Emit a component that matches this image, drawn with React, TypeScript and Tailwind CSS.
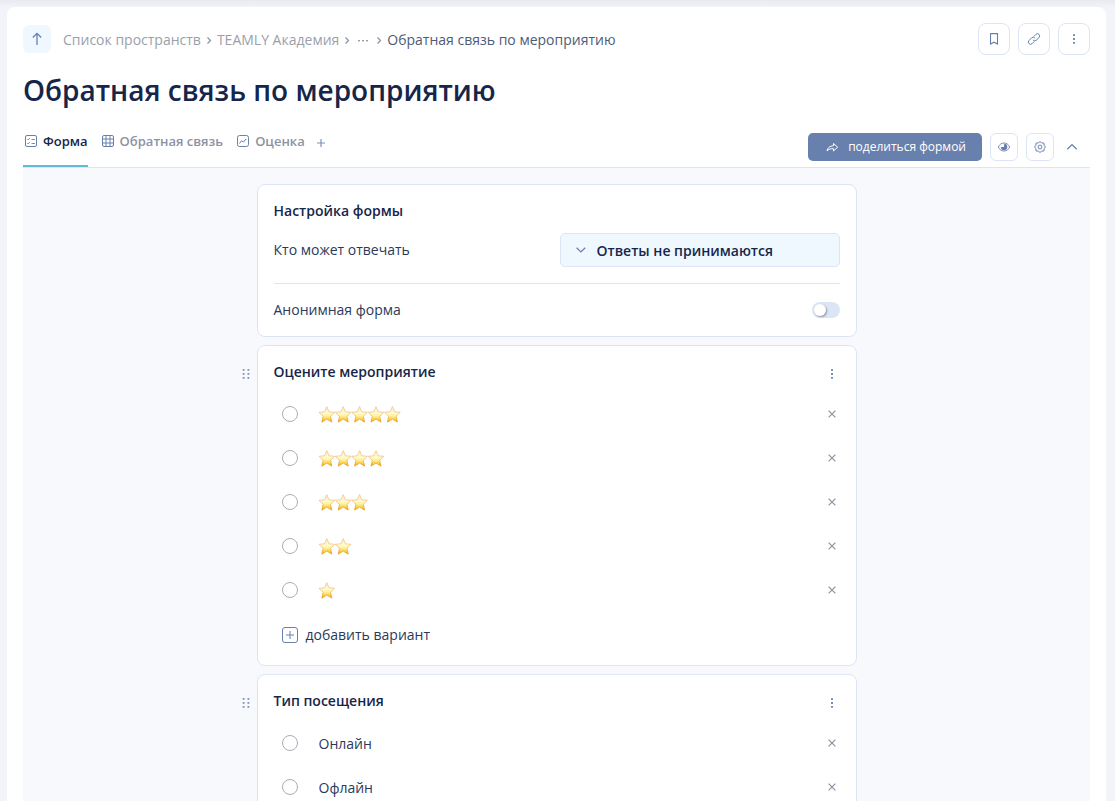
import { ReactNode } from "react";

interface StarsProps {
  count: number;
}

interface Question {
  id: string;
  title: string;
  options: { label: string; stars?: number }[];
}

const questions: Question[] = [
  {
    id: "rating",
    title: "Оцените мероприятие",
    options: [
      { label: "5 звёзд", stars: 5 },
      { label: "4 звезды", stars: 4 },
      { label: "3 звезды", stars: 3 },
      { label: "2 звезды", stars: 2 },
      { label: "1 звезда", stars: 1 },
    ],
  },
  {
    id: "visit",
    title: "Тип посещения",
    options: [{ label: "Онлайн" }, { label: "Офлайн" }],
  },
];

function Chevron() {
  return (
    <svg className="h-4 w-4 shrink-0 text-[#8d95a8]" viewBox="0 0 16 16" fill="none" stroke="currentColor" strokeWidth="1.3" aria-hidden="true">
      <path d="M6.5 5.5l3 3-3 3" />
    </svg>
  );
}

function DotsVertical() {
  return (
    <svg className="h-4 w-4" viewBox="0 0 16 16" fill="currentColor" aria-hidden="true">
      <rect x="7" y="3.3" width="2" height="1.6" />
      <rect x="7" y="7.1" width="2" height="1.8" />
      <rect x="7" y="11.1" width="2" height="1.6" />
    </svg>
  );
}

function DragHandle() {
  return (
    <svg className="h-4 w-4" viewBox="0 0 16 16" fill="currentColor" opacity="0.85" aria-hidden="true">
      {[3, 7, 11].map((y) => (
        <g key={y}>
          <rect x="4.7" y={y} width="1.8" height="1.8" />
          <rect x="9.5" y={y} width="1.8" height="1.8" />
        </g>
      ))}
    </svg>
  );
}

function Stars({ count }: StarsProps) {
  const width = 17 + (count - 1) * 16.4;
  return (
    <svg width={width} height="18" viewBox={`0 0 ${width} 18`} aria-hidden="true">
      <defs>
        <linearGradient id={`star-${count}`} x1="0" y1="0" x2="0" y2="1">
          <stop offset="0" stopColor="#fdeebb" />
          <stop offset="0.4" stopColor="#fffbd2" />
          <stop offset="0.6" stopColor="#fef1a0" />
          <stop offset="0.8" stopColor="#fbd348" />
          <stop offset="1" stopColor="#f2a007" />
        </linearGradient>
        <linearGradient id={`edge-${count}`} x1="0" y1="0" x2="0" y2="1">
          <stop offset="0" stopColor="#efc690" />
          <stop offset="0.45" stopColor="#f0c184" />
          <stop offset="1" stopColor="#e99a12" />
        </linearGradient>
      </defs>
      {Array.from({ length: count }).map((_, i) => (
        <path
          key={i}
          transform={`translate(${i * 16.4} 1)`}
          d="M7.8 .6l2.200 5.200 5.700.5-4.200 3.900 1.300 5.900-5-3-5 3 1.300-5.900-4.200-3.900 5.700-.5z"
          fill={`url(#star-${count})`}
          stroke={`url(#edge-${count})`}
          strokeWidth="0.8"
          strokeLinejoin="round"
        />
      ))}
    </svg>
  );
}

function Tab({ icon, label, active }: { icon: ReactNode; label: string; active?: boolean }) {
  return (
    <button
      type="button"
      className={
        active
          ? "flex items-center gap-1 border-b-2 border-[#63b8da] pb-[14px] text-[13px] leading-5 font-semibold text-[#16264a]"
          : "flex items-center gap-1 border-b-2 border-transparent pb-[14px] text-[13px] leading-5 font-semibold text-[#8c93a3]"
      }
    >
      <svg className="h-4 w-4 text-[#6880ae]" viewBox="0 0 16 16" fill="none" stroke="currentColor" aria-hidden="true">
        {icon}
      </svg>
      {label}
    </button>
  );
}

function QuestionCard({ question }: { question: Question }) {
  return (
    <section className="grid grid-cols-[22px_minmax(0,1fr)_22px]">
      <button type="button" aria-label="Переместить" className="mt-[21px] flex h-4 justify-center text-[#6880ae]">
        <DragHandle />
      </button>
      <div className="rounded-lg border border-[#dce5f5] bg-white p-4">
        <div className="flex items-center justify-between">
          <h2 className="text-sm leading-5 font-semibold text-[#16264a]">{question.title}</h2>
          <button type="button" aria-label="Меню вопроса" className="mt-1 text-[#6880ae]">
            <DotsVertical />
          </button>
        </div>
        <ul className="mt-[10px]">
          {question.options.map((option) => (
            <li key={option.label} className="flex h-11 items-center pl-2">
              <label className="flex flex-1 items-center gap-[21px]">
                <input
                  type="radio"
                  name={question.id}
                  aria-label={option.label}
                  className="h-4 w-4 appearance-none rounded-full border border-[#a9adb6] bg-white checked:border-[5px] checked:border-[#6880ae]"
                />
                {option.stars ? <Stars count={option.stars} /> : <span className="pt-0.5">{option.label}</span>}
              </label>
              <button type="button" aria-label="Удалить вариант" className="text-[#8c93a3]">
                <svg className="h-4 w-4" viewBox="0 0 16 16" fill="none" stroke="currentColor" strokeWidth="1.2" aria-hidden="true">
                  <path d="M4.6 4.6l6.800 6.800M11.400 4.600l-6.800 6.800" />
                </svg>
              </button>
            </li>
          ))}
        </ul>
        <button type="button" className="mt-2 flex h-[29px] items-center gap-2 pl-2">
          <svg className="h-4 w-4 text-[#6880ae]" viewBox="0 0 16 16" fill="none" stroke="currentColor" aria-hidden="true">
            <rect x="0.5" y="0.5" width="15" height="15" rx="2.5" />
            <path d="M8 4v8M4 8h8" />
          </svg>
          добавить вариант
        </button>
      </div>
    </section>
  );
}

export default function App() {
  return (
    <div className="h-screen overflow-hidden bg-[#f3f4f9] bg-linear-to-b from-[#e9eaef] to-[#f3f4f9] to-[8px] pt-[7px] pr-[9px] pl-[7px] font-['Open_Sans',sans-serif] text-sm font-normal text-[#2b3a5a]">
      <main className="min-h-full rounded-t-lg bg-white px-4 pt-4">
        {/* Breadcrumbs */}
        <header className="flex items-center justify-between">
          <div className="flex items-center gap-3">
            <button type="button" aria-label="Наверх" className="flex h-7 w-7 items-center justify-center rounded-md bg-[#f0f8ff] text-[#6880ae]">
              <svg className="h-4 w-4" viewBox="0 0 16 16" fill="none" stroke="currentColor" strokeWidth="1.3" aria-hidden="true">
                <path d="M8 14V2.5M3.8 6.500L8 2.300l4.200 4.200" />
              </svg>
            </button>
            <nav aria-label="Путь" className="flex items-center pt-0.5 text-[#9a9fac]">
              <a href="#spaces">Список пространств</a>
              <Chevron />
              <a href="#academy">TEAMLY Академия</a>
              <Chevron />
              <button type="button" aria-label="Показать весь путь">
                <svg className="h-4 w-4" viewBox="0 0 16 16" fill="currentColor" aria-hidden="true">
                  <rect x="3" y="8" width="2" height="1.4" />
                  <rect x="7" y="8" width="2" height="1.4" />
                  <rect x="11" y="8" width="2" height="1.4" />
                </svg>
              </button>
              <Chevron />
              <a href="#current" className="text-[#4e5b77]">
                Обратная связь по мероприятию
              </a>
            </nav>
          </div>
          <div className="flex gap-2 text-[#6880ae]">
            <button type="button" aria-label="В закладки" className="flex h-8 w-8 items-center justify-center rounded-lg border border-[#dce5f5]">
              <svg className="h-4 w-4" viewBox="0 0 16 16" fill="none" stroke="currentColor" strokeWidth="1.1" aria-hidden="true">
                <path d="M4.500 2.600h7v10.400L8 11.200l-3.500 1.800z" />
              </svg>
            </button>
            <button type="button" aria-label="Скопировать ссылку" className="flex h-8 w-8 items-center justify-center rounded-lg border border-[#dce5f5]">
              <svg className="h-4 w-4" viewBox="0 0 24 24" fill="none" stroke="currentColor" strokeWidth="1.5" strokeLinecap="round" aria-hidden="true">
                <path d="M10.800 13.800a3.300 3.300 0 0 0 4.700 0l4-4a3.300 3.300 0 0 0-4.700-4.700l-2.600 2.600" />
                <path d="M13.200 10.200a3.300 3.300 0 0 0-4.700 0l-4 4a3.300 3.300 0 0 0 4.700 4.700l2.600-2.600" />
              </svg>
            </button>
            <button type="button" aria-label="Ещё" className="flex h-8 w-8 items-center justify-center rounded-lg border border-[#dce5f5]">
              <DotsVertical />
            </button>
          </div>
        </header>

        <h1 className="mt-4 text-[28px] leading-[38px] font-semibold text-[#16264a]">Обратная связь по мероприятию</h1>

        {/* Tabs and form actions */}
        <div className="mt-[22px] flex items-start justify-between border-b border-[#dce5f5]">
          <div className="flex gap-3">
            <Tab
              active
              label="Форма"
              icon={
                <>
                  <rect x="2.5" y="2.5" width="11" height="11" rx="1.5" />
                  <path d="M4.300 6l.9.900 1.600-1.800M4.300 10l.9.900 1.600-1.800M8.500 6.500H12M8.500 10.500H12" strokeWidth="0.9" />
                </>
              }
            />
            <Tab
              label="Обратная связь"
              icon={
                <>
                  <rect x="2.5" y="2.5" width="11" height="11" rx="1.5" />
                  <path d="M6 2.500v11M10 2.500v11M2.500 6h11M2.500 10h11" />
                </>
              }
            />
            <Tab
              label="Оценка"
              icon={
                <>
                  <rect x="2.5" y="2.5" width="11" height="11" rx="2" />
                  <path d="M4.500 10.500l2-2.700 2 1.200 2.800-3.200" />
                </>
              }
            />
            <button type="button" aria-label="Добавить вкладку" className="mt-1 h-4 text-[#7d92bd]">
              <svg className="h-4 w-2" viewBox="0 0 8 16" fill="none" stroke="currentColor" strokeWidth="1.2" aria-hidden="true">
                <path d="M4 4v8M0 8h8" />
              </svg>
            </button>
          </div>
          <div className="mt-0.5 flex gap-2 pr-2 text-[#6880ae]">
            <button type="button" className="flex h-7 items-center gap-2 rounded-[5px] bg-[#6880ae] px-4 text-xs text-white">
              <svg className="h-4 w-4" viewBox="0 0 16 16" fill="none" stroke="currentColor" strokeLinejoin="round" aria-hidden="true">
                <path d="M9.500 4.500l4.200 3.700-4.200 3.700V9.700C6.500 9.600 4.500 10.200 3 12c.5-3 2.600-5 6.500-5.300z" />
              </svg>
              поделиться формой
            </button>
            <button type="button" aria-label="Просмотр" className="flex h-7 w-7 items-center justify-center rounded-md border border-[#dce5f5]">
              <svg className="h-4 w-4" viewBox="0 0 16 16" fill="none" stroke="currentColor" strokeWidth="0.9" aria-hidden="true">
                <path d="M2.300 8C3.500 5.500 5.500 4 8 4s4.500 1.500 5.700 4c-1.200 2.500-3.200 4-5.700 4S3.500 10.500 2.300 8z" />
                <path d="M8.200 4.800A3.200 3.200 0 1 1 4.900 8H8z" fill="currentColor" stroke="none" />
              </svg>
            </button>
            <button type="button" aria-label="Настройки" className="flex h-7 w-7 items-center justify-center rounded-md border border-[#dce5f5]">
              <svg className="h-4 w-4" viewBox="0 0 16 16" fill="none" stroke="currentColor" strokeLinejoin="round" aria-hidden="true">
                <path d="M8 2.500l1.500 1.300 2.400.3.300 2.400L13.500 8l-1.300 1.500-.3 2.400-2.400.3L8 13.500l-1.500-1.300-2.400-.3-.3-2.400L2.500 8l1.300-1.500.3-2.400 2.400-.3z" />
                <circle cx="8" cy="8" r="1.9" />
              </svg>
            </button>
            <button type="button" aria-label="Свернуть" className="flex h-7 w-5 items-center justify-center">
              <svg className="h-4 w-4" viewBox="0 0 16 16" fill="none" stroke="currentColor" strokeWidth="1.3" aria-hidden="true">
                <path d="M3.300 10.200L8 5.600l4.700 4.600" />
              </svg>
            </button>
          </div>
        </div>

        {/* Form builder */}
        <div className="min-h-screen bg-[#f7f9fd] pt-4">
          <div className="mx-auto flex max-w-[644px] flex-col gap-2">
            <section className="mx-[22px] rounded-lg border border-[#dce5f5] bg-white p-4">
              <h2 className="text-sm leading-5 font-semibold text-[#16264a]">Настройка формы</h2>
              <div className="mt-3 flex items-center justify-between border-b border-[#dce5f5] pb-4">
                <label htmlFor="access">Кто может отвечать</label>
                <div className="relative">
                  <select
                    id="access"
                    className="h-[34px] w-[280px] appearance-none rounded-[5px] border border-[#dce5f5] bg-[#f0f8ff] pt-0.5 pl-9 text-sm font-semibold text-[#16264a]"
                  >
                    <option>Ответы не принимаются</option>
                  </select>
                  <svg className="pointer-events-none absolute top-2 left-3 h-4 w-4 text-[#6880ae]" viewBox="0 0 16 16" fill="none" stroke="currentColor" strokeWidth="1.2" aria-hidden="true">
                    <path d="M4.600 6.800l4.300 4.200 4.300-4.200" />
                  </svg>
                </div>
              </div>
              <div className="mt-4 flex items-center justify-between">
                <label htmlFor="anonymous">Анонимная форма</label>
                <input
                  id="anonymous"
                  type="checkbox"
                  role="switch"
                  className="flex h-4 w-7 appearance-none items-center rounded-full bg-[#dce5f5] px-0.5 before:h-3 before:w-3 before:rounded-full before:bg-white before:shadow-[1px_1px_2px_#8c93a3] checked:justify-end checked:bg-[#6880ae]"
                />
              </div>
            </section>
            {questions.map((question) => (
              <QuestionCard key={question.id} question={question} />
            ))}
          </div>
        </div>
      </main>
    </div>
  );
}
